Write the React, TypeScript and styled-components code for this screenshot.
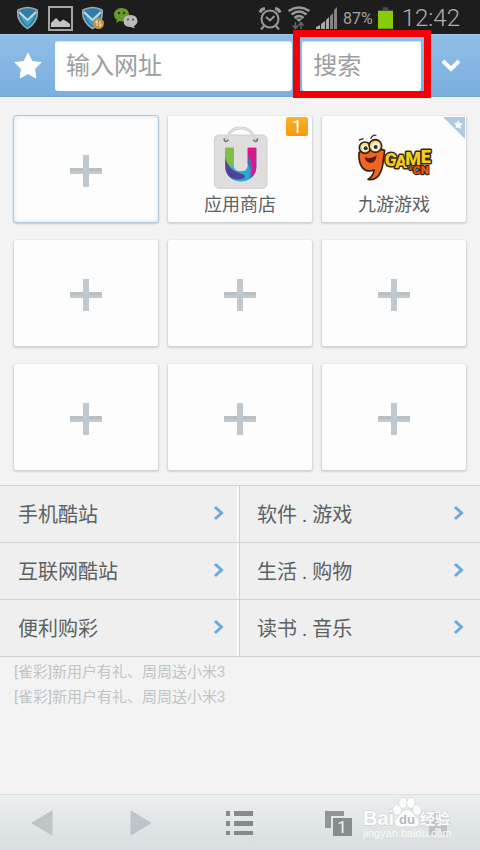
import React from 'react';
import styled, { createGlobalStyle, css } from 'styled-components';

const GlobalStyle = createGlobalStyle`
  * { box-sizing: border-box; }
  body {
    margin: 0;
    background: #f3f3f3;
    font-family: Roboto, "Noto Sans CJK SC", sans-serif;
  }
  button, input { font-family: inherit; }
`;

const Page = styled.div`
  display: flex;
  flex-direction: column;
  min-height: 100vh;
  background: #f3f3f3;
`;

const StatusBar = styled.div`
  display: flex;
  align-items: center;
  justify-content: space-between;
  height: 34px;
  padding: 2px 20px 0 16px;
  background: #1d1d1d;
`;

const Notices = styled.div`
  display: flex;
  align-items: center;
  gap: 8px;
`;

const Signals = styled.div`
  display: flex;
  align-items: center;
  gap: 5px;
  color: #a2a2a2;
  font-size: 16px;
`;

const Clock = styled.time`
  margin-left: 4px;
  font-size: 24px;
  line-height: 32px;
  font-weight: 300;
  color: #b0b0b0;
`;

const AddressBar = styled.header`
  display: grid;
  grid-template-columns: 45px 2fr 1fr 49px;
  column-gap: 10px;
  align-items: center;
  height: 63px;
  background: linear-gradient(#8fbde7, #7bafdf);
  border-top: 1px solid #a5c8e8;
  border-bottom: 1px solid #76a8d6;
`;

const BarButton = styled.button`
  display: flex;
  align-items: center;
  justify-content: center;
  height: 50px;
  padding: 0;
  border: 0;
  background: none;
`;

const StarButton = styled(BarButton)`
  padding-left: 10px;
`;

const ChevronButton = styled(BarButton)`
  padding-right: 9px;
`;

const Field = styled.label`
  position: relative;
  display: block;
`;

const TextBox = styled.input`
  display: block;
  width: 100%;
  height: 50px;
  padding: 0 11px;
  border: 0;
  border-radius: 3px;
  background: #fefefe;
  box-shadow: inset 0 1px 1px #d5e2ee;
  color: #555;
  font-size: 24px;
  &::placeholder { color: #9a9fa2; opacity: 1; }
`;

const Highlight = styled.span`
  position: absolute;
  inset: -11px -10px -7px -9px;
  border: 7px solid #f30007;
  pointer-events: none;
`;

const Main = styled.main`
  flex: 1;
`;

const Tiles = styled.section`
  display: grid;
  grid-template-columns: repeat(3, 1fr);
  gap: 18px 10px;
  padding: 19px 14px 15px;
`;

const Tile = styled.button<{ $active?: boolean }>`
  position: relative;
  display: flex;
  flex-direction: column;
  align-items: center;
  justify-content: center;
  height: 106px;
  padding: 3px 0 0;
  border: 0;
  border-radius: 2px;
  background: #fdfdfd;
  color: #5c6163;
  font-size: 18px;
  line-height: 26px;
  box-shadow: 0 1px 2px 1px #cfd1d2;
  ${(p) =>
    p.$active &&
    css`
      border-radius: 3px;
      box-shadow: 0 0 0 1px #b3c9dc, 0 1px 2px 1px #b9c9d6, inset 0 0 5px #cfe4f6;
    `}
`;

const TileArt = styled.span`
  display: flex;
  align-items: center;
  justify-content: center;
  height: 68px;
`;

const Badge = styled.span`
  position: absolute;
  top: 1px;
  right: 4px;
  width: 22px;
  height: 19px;
  border-radius: 2px;
  background: linear-gradient(#fbb02c, #f39a0c);
  color: #fff;
  font-size: 18px;
  line-height: 19px;
  text-align: center;
`;

const Fold = styled.svg`
  position: absolute;
  top: 1px;
  right: 1px;
`;

const Links = styled.nav`
  display: grid;
  grid-template-columns: 1fr 1fr;
  border-top: 1px solid #d0d2d2;
`;

const LinkRow = styled.a`
  display: flex;
  align-items: center;
  justify-content: space-between;
  height: 57px;
  padding: 0 15px 2px 18px;
  background: #efefef;
  border-bottom: 1px solid #d0d2d2;
  color: #5c6163;
  font-size: 20px;
  text-decoration: none;
  white-space: pre;
  &:nth-child(odd) {
    border-right: 1px solid #d0d2d2;
    box-shadow: inset -2px 0 #f9f9f9;
  }
  &:nth-child(even) { padding-left: 17px; padding-right: 16px; }
`;

const News = styled.section`
  display: flex;
  flex-direction: column;
  padding: 3px 14px;
`;

const NewsLink = styled.a`
  color: #c0c4c5;
  font-size: 15px;
  line-height: 25px;
  text-decoration: none;
`;

const Toolbar = styled.footer`
  position: relative;
  display: flex;
  align-items: center;
  justify-content: space-between;
  height: 56px;
  padding: 0 27px;
  border-top: 1px solid #dcdfe0;
  background: linear-gradient(#ebeff0, #d7dde0);
`;

const Tool = styled.button`
  display: flex;
  align-items: center;
  justify-content: center;
  width: 30px;
  height: 40px;
  padding: 0;
  border: 0;
  background: none;
`;

const Watermark = styled.svg`
  position: absolute;
  right: 26px;
  bottom: 10px;
  pointer-events: none;
`;

const ShieldIcon = ({ coin }: { coin?: boolean }) => (
  <svg width="24" height="24" viewBox="0 0 24 24" aria-hidden="true">
    <path d="M2 4Q12-1 21 4Q23 15 11.500 22.500Q0 15 2 4Z" fill="#2f7da8" stroke="#9dadb5" strokeWidth="1.500" />
    <path d="M4 6L11.500 13L19 6Q18 15 11.500 20Q5 15 4 6Z" fill="#3aa0cf" />
    <path d="M3 6L11.500 14L20 6" fill="none" stroke="#c9d5da" strokeWidth="2" />
    {coin && (
      <g>
        <circle cx="17.500" cy="17.500" r="5.500" fill="#bd9245" />
        <path d="M16 20V15L14.500 16.500M19 15V20L20.500 18.500" fill="none" stroke="#eadbb5" strokeWidth="1.200" />
      </g>
    )}
  </svg>
);

const PictureIcon = () => (
  <svg width="25" height="25" viewBox="0 0 25 25" aria-hidden="true">
    <rect x="1" y="1" width="23" height="23" fill="none" stroke="#a5a5a5" strokeWidth="2" />
    <path d="M3 21V17L8 12L12 16L15 13.500L18 15L22 18V21Z" fill="#c4c4c4" />
  </svg>
);

const ChatIcon = () => (
  <svg width="25" height="22" viewBox="0 0 25 22" aria-hidden="true">
    <path d="M8.500 1C4 1 1 4 1 8Q1 11 4 13L3 16L6.500 14Q16 16 16 8Q16 1 8.500 1Z" fill="#679b27" />
    <circle cx="6" cy="6" r="1.200" fill="#26390f" />
    <circle cx="11" cy="6" r="1.200" fill="#26390f" />
    <path d="M17.500 8Q10.500 8 10.500 14Q10.500 20 18 20L21.500 21.500L21 19Q24.500 17 24.500 14Q24 8 17.500 8Z" fill="#bababa" />
    <circle cx="15" cy="12.500" r="1" fill="#444" />
    <circle cx="20" cy="12.500" r="1" fill="#444" />
  </svg>
);

const AlarmIcon = () => (
  <svg width="24" height="25" viewBox="0 0 24 25" fill="none" stroke="#999" strokeWidth="2" aria-hidden="true">
    <circle cx="12" cy="13" r="8.500" />
    <path d="M8 11L12 14.500L16.500 10M6 20L3 23.500M18 20L21 23.500" />
    <path d="M2 6.500Q3 3 7 2.500M22 6.500Q21 3 17 2.500" strokeWidth="3" />
  </svg>
);

const WifiIcon = () => (
  <svg width="24" height="26" viewBox="0 0 24 26" fill="none" stroke="#999" aria-hidden="true">
    <path d="M1.500 6Q12-1 22.500 6M4.500 9.500Q12 3.500 19.500 9.500M7.500 13Q12 9 16.500 13" strokeWidth="2.500" />
    <path d="M12 17L8.500 13.500H15.500Z" fill="#999" stroke="none" />
    <path d="M8.500 17V23M6 20.500L8.500 23.500L11 20.500M14 24V18M11.500 20.500L14 17.500L16.500 20.500" strokeWidth="1.500" stroke="#666" />
  </svg>
);

const SignalIcon = () => (
  <svg width="22" height="22" viewBox="0 0 22 22" aria-hidden="true">
    <path d="M0 22V20L4 18V22ZM5 22V17L9 14V22ZM10 22V13L13 10V22Z" fill="#aaa" />
    <path d="M14 22V9L17 6V22ZM18 22V3L21 0V22Z" fill="#858585" />
  </svg>
);

const BatteryIcon = () => (
  <svg width="15" height="22" viewBox="0 0 16 23" aria-hidden="true">
    <path d="M5 0H11V3H16V6H0V3H5Z" fill="#484f42" />
    <path d="M0 4H16V23H0Z" fill="#86cc08" />
  </svg>
);

const Plus = () => (
  <svg width="32" height="32" viewBox="0 0 32 32" aria-hidden="true">
    <path d="M13 0H19V13H32V19H19V32H13V19H0V13H13Z" fill="#c0c9cf" />
    <path d="M0 13H13V16H0ZM19 13H32V16H19Z" fill="#b7bfc3" />
  </svg>
);

const StoreLogo = () => (
  <svg width="57" height="65" viewBox="140 58 171 195" aria-hidden="true">
    <rect x="147" y="88" width="158" height="160" rx="14" fill="#dfdedc" stroke="#d3d0ce" strokeWidth="3" />
    <path d="M185 104C187 54 264 54 268 104" fill="none" stroke="#cac9c8" strokeWidth="8" />
    <path d="M185 104C187 54 264 54 268 104" fill="none" stroke="#f1f1f0" strokeWidth="3" />
    <path d="M177 98V104Q183 112 189 102M276 98V104Q270 112 264 102" fill="none" stroke="#777" strokeWidth="5" />
    <path d="M180 126H205V180Q206 197 226 197Q246 197 247 180V126H273V184C273 242 180 242 180 184Z" fill="#2ba9d5" />
    <path d="M180 126H205V188L180 170Z" fill="#80be49" />
    <path d="M180 154C184 178 199 196 222 202C242 208 244 214 230 220C201 226 180 209 180 184Z" fill="#4f429b" />
    <path d="M247 126H273V184C273 199 265 211 254 218C264 196 263 169 247 150Z" fill="#d81989" />
    <path d="M247 150C265 168 264 198 251 219C257 199 256 185 247 174Z" fill="#5364b0" />
  </svg>
);

const GameLogo = () => (
  <svg width="77" height="50" viewBox="120 80 231 150" role="img" aria-label="9GAME.CN">
    <path d="M129 101L143 97M164 97Q170 84 181 87" fill="none" stroke="#39352f" strokeWidth="4" />
    <path d="M129 139C127 175 140 195 163 194L174 191Q173 208 156 219Q190 225 200 177L206 132L180 124L145 126Z" fill="#ee6420" stroke="#35200f" strokeWidth="5" strokeLinejoin="round" />
    <circle cx="147" cy="124" r="17" fill="#f5d37f" stroke="#35200f" strokeWidth="5" />
    <circle cx="178" cy="119" r="19" fill="#f5d37f" stroke="#35200f" strokeWidth="5" />
    <circle cx="148" cy="125" r="10" fill="#f8f4e6" />
    <circle cx="179" cy="121" r="12" fill="#f8f4e6" />
    <circle cx="149" cy="126" r="6" fill="#35312d" />
    <circle cx="179" cy="122" r="6" fill="#35312d" />
    <path d="M146 153Q166 160 182 147Q179 170 163 170Q149 168 146 153Z" fill="#5c1913" />
    <g fontFamily="Roboto, sans-serif" fontWeight="900" paintOrder="stroke" strokeLinejoin="round" stroke="#3b280d">
      <g fontSize="54" fill="#f0ce22" strokeWidth="9">
        <text x="206" y="178">G</text>
        <text x="237" y="186">A</text>
        <text x="268" y="177">M</text>
        <text x="314" y="170">E</text>
      </g>
      <circle cx="284" cy="187" r="4" fill="#e85920" strokeWidth="7" />
      <g fontSize="35" fill="#e85920" strokeWidth="7">
        <text x="291" y="202">CN</text>
      </g>
    </g>
  </svg>
);

const STAR = 'M14 1L18 9.500L27 10.500L20.500 17L22 26L14 21.500L6 26L7.500 17L1 10.500L10 9.500Z';

const Arrow = () => (
  <svg width="11" height="16" viewBox="0 0 11 16" fill="none" aria-hidden="true">
    <path d="M2 2L8.500 8L2 14" stroke="#6caadb" strokeWidth="3" />
  </svg>
);

const links = ['手机酷站', '软件 . 游戏', '互联网酷站', '生活 . 购物', '便利购彩', '读书 . 音乐'];
const news = ['[雀彩]新用户有礼、周周送小米3', '[雀彩]新用户有礼、周周送小米3'];
const emptySlots = [1, 2, 3, 4, 5, 6];

export default function App() {
  return (
    <Page>
      <GlobalStyle />
      <StatusBar>
        <Notices>
          <ShieldIcon />
          <PictureIcon />
          <ShieldIcon coin />
          <ChatIcon />
        </Notices>
        <Signals>
          <AlarmIcon />
          <WifiIcon />
          <SignalIcon />
          <span>87%</span>
          <BatteryIcon />
          <Clock>12:42</Clock>
        </Signals>
      </StatusBar>

      <AddressBar>
        <StarButton aria-label="收藏">
          <svg width="28" height="28" viewBox="0 0 28 28" aria-hidden="true">
            <path d={STAR} fill="#fff" stroke="#fff" strokeLinejoin="round" />
          </svg>
        </StarButton>
        <Field>
          <TextBox type="text" placeholder="输入网址" aria-label="输入网址" />
        </Field>
        <Field>
          <TextBox type="text" placeholder="搜索" aria-label="搜索" />
          <Highlight />
        </Field>
        <ChevronButton aria-label="展开">
          <svg width="22" height="16" viewBox="0 0 22 16" fill="none" aria-hidden="true">
            <path d="M3 3L11 11L19 3" stroke="#fff" strokeWidth="4" />
          </svg>
        </ChevronButton>
      </AddressBar>

      <Main>
        <Tiles>
          <Tile $active aria-label="添加">
            <Plus />
          </Tile>
          <Tile>
            <TileArt><StoreLogo /></TileArt>
            应用商店
            <Badge>1</Badge>
          </Tile>
          <Tile>
            <TileArt><GameLogo /></TileArt>
            九游游戏
            <Fold width="22" height="22" viewBox="0 0 22 22" aria-hidden="true">
              <path d="M0 0H22V22Z" fill="#adcbe6" />
              <path d="M15 3L16.500 6L20 6.500L17.500 9L18 12L15 10.500L12.500 11L13 8L10.500 6L14 5.500Z" fill="#f4f8fc" />
            </Fold>
          </Tile>
          {emptySlots.map((slot) => (
            <Tile key={slot} aria-label="添加">
              <Plus />
            </Tile>
          ))}
        </Tiles>

        <Links>
          {links.map((label) => (
            <LinkRow key={label} href="#">
              {label}
              <Arrow />
            </LinkRow>
          ))}
        </Links>

        <News>
          {news.map((title, index) => (
            <NewsLink key={index} href="#">{title}</NewsLink>
          ))}
        </News>
      </Main>

      <Toolbar>
        <Tool aria-label="后退">
          <svg width="22" height="26" viewBox="0 0 22 26" aria-hidden="true">
            <path d="M21 1V25L1 13Z" fill="#bec4c7" stroke="#bec4c7" strokeLinejoin="round" />
          </svg>
        </Tool>
        <Tool aria-label="前进">
          <svg width="22" height="26" viewBox="0 0 22 26" aria-hidden="true">
            <path d="M1 1V25L21 13Z" fill="#bec4c7" stroke="#bec4c7" strokeLinejoin="round" />
          </svg>
        </Tool>
        <Tool aria-label="菜单">
          <svg width="28" height="26" viewBox="0 0 28 26" fill="#858b8d" aria-hidden="true">
            <path d="M0 1H4V6H0ZM8 1H27V6H8ZM0 11H4V16H0ZM8 11H27V16H8ZM0 21H4V25H0ZM8 21H27V25H8Z" />
          </svg>
        </Tool>
        <Tool aria-label="窗口">
          <svg width="28" height="26" viewBox="0 0 28 26" aria-hidden="true">
            <path d="M0 1H19V6H6V18H0Z" fill="#8e9699" />
            <path d="M8 8H27V26H8Z" fill="#858d90" />
            <text x="17" y="23" textAnchor="middle" fontSize="17" fontFamily="Roboto, sans-serif" fill="#f1f4f5">1</text>
          </svg>
        </Tool>
        <Tool aria-label="主页">
          <svg width="28" height="26" viewBox="0 0 28 26" aria-hidden="true">
            <path d="M14 1L27 14H23V25H17V18H11V25H5V14H1Z" fill="#bcc2c5" />
          </svg>
        </Tool>
        <Watermark width="92" height="44" viewBox="0 0 92 44" role="img" aria-label="Baidu 经验">
          <g fill="#fbfcfc" stroke="#c8ced1" strokeWidth="1" paintOrder="stroke" fontFamily='"Liberation Sans", "Noto Sans CJK SC", sans-serif'>
            <text x="1" y="29" fontSize="20" fontWeight="700">Bai</text>
            <ellipse cx="35" cy="14" rx="4" ry="5" />
            <ellipse cx="41" cy="7" rx="4" ry="5" />
            <ellipse cx="49" cy="7" rx="4" ry="5" />
            <ellipse cx="55" cy="14" rx="4" ry="5" />
            <path d="M45 14C39 14 38 20 34 23C31 30 36 32 45 30C54 32 59 30 56 23C52 20 51 14 45 14Z" />
            <text x="58" y="28" fontSize="15" fontWeight="700">经验</text>
          </g>
          <text x="45" y="28" textAnchor="middle" fontSize="13" fontWeight="700" fontFamily="Liberation Sans, sans-serif" fill="#b2babd">du</text>
          <text x="1" y="41" fontSize="11" fontFamily="Liberation Sans, sans-serif" fill="#f8fafa">jingyan.baidu.com</text>
        </Watermark>
      </Toolbar>
    </Page>
  );
}
